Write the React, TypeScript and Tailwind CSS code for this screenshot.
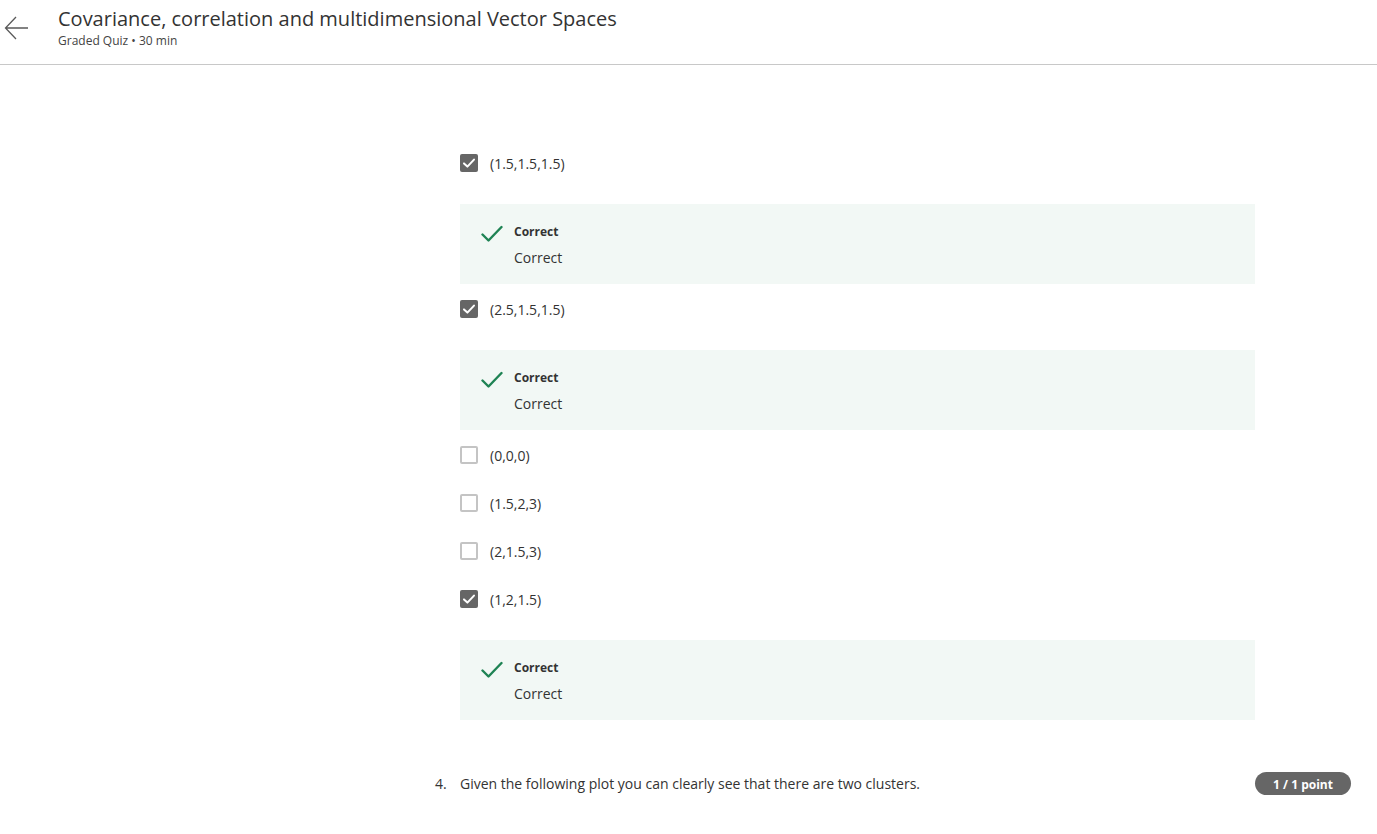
import React from "react";

type Option = { label: string; checked: boolean };

const options: Option[] = [
  { label: "(1.5,1.5,1.5)", checked: true },
  { label: "(2.5,1.5,1.5)", checked: true },
  { label: "(0,0,0)", checked: false },
  { label: "(1.5,2,3)", checked: false },
  { label: "(2,1.5,3)", checked: false },
  { label: "(1,2,1.5)", checked: true },
];

function CheckBox({ checked }: { checked: boolean }) {
  if (checked) {
    return (
      <span className="flex h-[18px] w-[18px] items-center justify-center rounded-[2px] bg-[#666666]">
        <svg width="14" height="14" viewBox="0 0 14 14" fill="none">
          <path d="M2 7.4 L5.4 10.6 L12 3.6" stroke="#ffffff" strokeWidth="2" strokeLinecap="round" strokeLinejoin="round" />
        </svg>
      </span>
    );
  }
  return <span className="block h-[18px] w-[18px] rounded-[2px] border-2 border-[#c4c4c4] bg-white" />;
}

function Feedback() {
  return (
    <div className="mt-[17px] mb-px flex h-20 w-[795px] bg-[#f2f8f5] pl-[21px] pt-5">
      <svg width="22" height="18" viewBox="0 0 22 18" fill="none" className="mt-[1px]">
        <path d="M1.5 9.5 L7.5 15.5 L20.5 2" stroke="#1f8354" strokeWidth="2.4" strokeLinecap="round" strokeLinejoin="round" />
      </svg>
      <div className="ml-[11px] flex flex-col">
        <span className="text-[12px] font-bold leading-4 text-[#333333]">Correct</span>
        <span className="mt-2 text-[14px] leading-5 text-[#333333]">Correct</span>
      </div>
    </div>
  );
}

export default function App() {
  return (
    <div className="min-h-[834px] bg-white text-[#333333]" style={{ fontFamily: '"Open Sans", "Noto Sans", sans-serif' }}>
      {/* Header */}
      <header className="flex h-[65px] border-b border-[#c8c8c8] pl-[4px] pt-[5px]">
        <svg width="26" height="26" viewBox="0 0 26 26" fill="none" className="mt-[10px]">
          <path d="M24 13 H2 M12 2 L1.5 13 L12 24" stroke="#5a5a5a" strokeWidth="1.3" />
        </svg>
        <div className="ml-[28px] flex flex-col">
          <h1 className="text-[20px] leading-7 text-[#333333]">Covariance, correlation and multidimensional Vector Spaces</h1>
          <p className="text-[12px] leading-4 text-[#444444]">Graded Quiz • 30 min</p>
        </div>
      </header>

      {/* Question body */}
      <main className="ml-[435px] mr-[26px] pt-[74px]">
        <div className="pl-[25px]">
          {options.map((o) => (
            <div key={o.label}>
              <div className="flex h-12 items-center">
                <CheckBox checked={o.checked} />
                <span className="ml-3 pt-[2px] text-[14px] leading-5 text-[#333333]">{o.label}</span>
              </div>
              {o.checked && <Feedback />}
            </div>
          ))}
        </div>

        <div className="mt-[52px] flex items-center justify-between">
          <div className="flex text-[14px] leading-5 text-[#333333]">
            <span className="w-[25px]">4.</span>
            <span>Given the following plot you can clearly see that there are two clusters.</span>
          </div>
          <span className="flex h-[23px] w-24 items-center justify-center rounded-full bg-[#666666] pt-[2px] text-[12px] font-bold text-white">
            1 / 1 point
          </span>
        </div>
      </main>
    </div>
  );
}
